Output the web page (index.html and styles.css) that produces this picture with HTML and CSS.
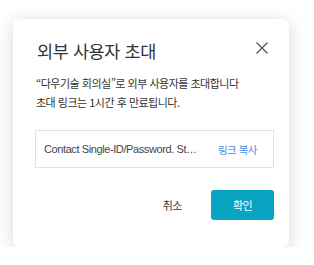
FILE: index.html
```html
<!DOCTYPE html>
<html lang="ko">

<head>
    <meta charset="UTF-8">
    <meta name="viewport" content="width=device-width, initial-scale=1.0">
    <title>외부 사용자 초대</title>
    <link rel="stylesheet" href="styles.css">
</head>

<body>
    <div class="dialog">
        <div class="dialog-header">
            <h1>외부 사용자 초대</h1>
            <button class="close-button" aria-label="닫기">
                <svg width="12" height="12" viewBox="0 0 12 12">
                    <path d="M0.5 0.5 L11.5 11.5 M11.5 0.5 L0.5 11.5" stroke="#555" stroke-width="1.2" fill="none"/>
                </svg>
            </button>
        </div>
        <p class="description">“다우기술 회의실”로 외부 사용자를 초대합니다<br>초대 링크는 1시간 후 만료됩니다.</p>
        <div class="link-box">
            <span class="link-text">Contact Single-ID/Password. Start the meeting</span>
            <a href="#" class="copy-link">링크 복사</a>
        </div>
        <div class="dialog-footer">
            <button class="cancel-button">취소</button>
            <button class="confirm-button">확인</button>
        </div>
    </div>
</body>

</html>
```

FILE: styles.css
```css
body {
    margin: 0;
    background-color: #fff;
    font-family: "Noto Sans CJK KR", sans-serif;
    color: #333;
}

.dialog {
    box-sizing: border-box;
    width: 276px;
    height: 228px;
    margin: 19px 0 0 13px;
    padding: 19px 15px 0 22px;
    background-color: #fff;
    border-radius: 6px;
    box-shadow: 0 3px 18px rgba(0, 0, 0, 0.16);
}

.dialog-header {
    display: flex;
    justify-content: space-between;
    align-items: flex-start;
}

h1 {
    margin: 0 0 0 2px;
    font-size: 17.5px;
    font-weight: normal;
    line-height: 26px;
    letter-spacing: -0.4px;
    color: #333;
}

.close-button {
    display: flex;
    padding: 0;
    margin: 4px 6px 0 0;
    border: none;
    background: none;
    cursor: pointer;
}

.description {
    margin: 10px 0 0 1px;
    font-size: 11px;
    line-height: 19px;
    letter-spacing: -0.5px;
    white-space: nowrap;
    color: #333;
}

.link-box {
    display: flex;
    align-items: center;
    gap: 18px;
    height: 38px;
    box-sizing: border-box;
    margin-top: 18px;
    padding: 0 16px 0 8px;
    border: 1px solid #e2e2e2;
}

.link-text {
    flex: 1;
    min-width: 0;
    overflow: hidden;
    white-space: nowrap;
    text-overflow: ellipsis;
    font-family: "Liberation Sans", "Noto Sans CJK KR", sans-serif;
    font-size: 11px;
    letter-spacing: -0.4px;
    color: #444;
}

.copy-link {
    font-size: 10.5px;
    letter-spacing: -0.5px;
    color: #4a90e2;
    text-decoration: none;
}

.dialog-footer {
    display: flex;
    justify-content: flex-end;
    align-items: center;
    gap: 29px;
    margin-top: 22px;
}

.cancel-button {
    padding: 0;
    border: none;
    background: none;
    font-family: inherit;
    font-size: 11px;
    letter-spacing: -0.5px;
    color: #333;
    cursor: pointer;
}

.confirm-button {
    width: 63px;
    height: 30px;
    border: none;
    border-radius: 3px;
    background-color: #0aa3c2;
    color: #fff;
    font-family: inherit;
    font-size: 11px;
    letter-spacing: -0.5px;
    cursor: pointer;
}
```
